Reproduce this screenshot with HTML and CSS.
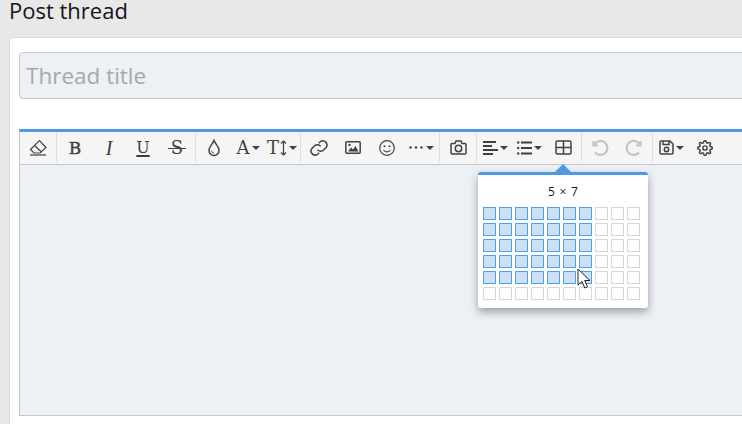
FILE: index.html
```html
<!DOCTYPE html>
<html lang="en">
<head>
<meta charset="utf-8">
<title>Post thread</title>
<link rel="stylesheet" href="styles.css">
</head>
<body>
<main class="page">
  <h1 class="page-title">Post thread</h1>
  <section class="card">
    <input class="title-input" type="text" placeholder="Thread title">
    <div class="editor">
      <div class="toolbar">
        <div class="group">
          <span class="btn"><svg class="icon" width="18" height="18" viewBox="0 0 18 18"><path d="M1.500 10.500 10.500 1.500l6.500 7-6 5.500H5z"/><path d="M5.500 6.500l7 6.500"/><path d="M1 16h16"/></svg></span>
        </div>
        <div class="group">
          <span class="btn"><span class="glyph bold">B</span></span>
          <span class="btn"><span class="glyph italic">I</span></span>
          <span class="btn"><span class="glyph underline">U</span></span>
          <span class="btn"><span class="glyph strike">S</span></span>
        </div>
        <div class="group">
          <span class="btn"><svg class="icon drop" width="14" height="18" viewBox="0 0 14 18"><path d="M7 1.500C5.800 5 2 7.500 2 11.500a5 5 0 0 0 10 0C12 7.500 8.200 5 7 1.500z"/><path d="M4.500 11.500A2.700 2.700 0 0 0 7 14.200" class="thin"/></svg></span>
          <span class="btn"><span class="glyph letter">A</span><span class="caret"></span></span>
          <span class="btn"><span class="glyph letter">T</span><svg class="icon arrows" width="7" height="16" viewBox="0 0 7 16"><path d="M3.500 1v14M1 3.500 3.500 1 6 3.500M1 12.500 3.500 15 6 12.500"/></svg><span class="caret"></span></span>
        </div>
        <div class="group">
          <span class="btn"><svg class="icon" width="20" height="20" viewBox="0 0 24 24"><path class="mid" d="M10 14a5 5 0 0 0 7.500.5l3-3a5 5 0 0 0-7-7l-1.700 1.700"/><path class="mid" d="M14 10a5 5 0 0 0-7.500-.5l-3 3a5 5 0 0 0 7 7l1.700-1.700"/></svg></span>
          <span class="btn"><svg class="icon" width="16" height="13" viewBox="0 0 16 13"><rect x=".8" y=".8" width="14.400" height="11.400" rx="1" class="bold-line"/><path class="solid" d="M3 10.500l3-4 2 2 2.500-3.500 3 5.500z"/><circle class="solid" cx="4.500" cy="4" r="1.200"/></svg></span>
          <span class="btn"><svg class="icon" width="18" height="18" viewBox="0 0 18 18"><circle cx="9" cy="9" r="7.300"/><circle class="solid" cx="6.500" cy="7.200" r="1"/><circle class="solid" cx="11.500" cy="7.200" r="1"/><path d="M5.500 11a4.200 4.200 0 0 0 7 0"/></svg></span>
          <span class="btn"><svg class="icon" width="15" height="3" viewBox="0 0 15 3"><circle class="solid" cx="1.500" cy="1.500" r="1.200"/><circle class="solid" cx="7" cy="1.500" r="1.200"/><circle class="solid" cx="12.500" cy="1.500" r="1.200"/></svg><span class="caret"></span></span>
        </div>
        <div class="group">
          <span class="btn"><svg class="icon" width="17" height="15" viewBox="0 0 17 15"><path class="bold-line" d="M1 4.500a1 1 0 0 1 1-1h3l1-2.500h5l1 2.500h3a1 1 0 0 1 1 1V13a1 1 0 0 1-1 1H2a1 1 0 0 1-1-1z"/><circle class="bold-line" cx="8.500" cy="8.500" r="3.200"/></svg></span>
        </div>
        <div class="group">
          <span class="btn wide"><svg class="icon" width="15" height="14" viewBox="0 0 15 14"><path class="mid" d="M0 1h13M0 5h9M0 9h15M0 13h10"/></svg><span class="caret"></span></span>
          <span class="btn wide"><svg class="icon" width="15" height="14" viewBox="0 0 15 14"><path class="mid" d="M4 1.500h11M4 7h11M4 12.500h11"/><circle class="solid" cx="1.200" cy="1.500" r="1.200"/><circle class="solid" cx="1.200" cy="7" r="1.200"/><circle class="solid" cx="1.200" cy="12.500" r="1.200"/></svg><span class="caret"></span></span>
          <span class="btn narrow"><svg class="icon" width="17" height="15" viewBox="0 0 17 15"><rect x="1" y="1" width="15" height="13" rx="1.500" class="bold-line"/><path class="bold-line" d="M1 7.500h15M8.500 1v13"/></svg></span>
        </div>
        <div class="group">
          <span class="btn off"><svg class="icon" width="18" height="17" viewBox="0 0 18 17"><path class="heavy" d="M2.500 2v4.500H7"/><path class="heavy" d="M3 6a7 7 0 1 1 1 7.500"/></svg></span>
          <span class="btn off"><svg class="icon" width="18" height="17" viewBox="0 0 18 17"><path class="heavy" d="M15.500 2v4.500H11"/><path class="heavy" d="M15 6a7 7 0 1 0-1 7.500"/></svg></span>
        </div>
        <div class="group">
          <span class="btn"><svg class="icon" width="15" height="15" viewBox="0 0 15 15"><path class="bold-line" d="M1 2a1 1 0 0 1 1-1h9l3 3v9a1 1 0 0 1-1 1H2a1 1 0 0 1-1-1z"/><path class="bold-line" d="M4 1v3.500h6V1"/><circle class="bold-line" cx="7.500" cy="9.500" r="2.200"/></svg><span class="caret"></span></span>
          <span class="btn"><svg class="icon" width="16" height="16" viewBox="0 0 24 24"><circle class="heavy" cx="12" cy="12" r="3.200"/><path class="heavy" d="M19.400 15a1.650 1.650 0 0 0 .33 1.820l.06.06a2 2 0 0 1 0 2.830 2 2 0 0 1-2.830 0l-.06-.06a1.650 1.650 0 0 0-1.820-.33 1.650 1.650 0 0 0-1 1.510V21a2 2 0 0 1-2 2 2 2 0 0 1-2-2v-.09A1.650 1.650 0 0 0 9 19.400a1.650 1.650 0 0 0-1.820.33l-.06.06a2 2 0 0 1-2.830 0 2 2 0 0 1 0-2.830l.06-.06a1.650 1.650 0 0 0 .33-1.820 1.650 1.650 0 0 0-1.510-1H3a2 2 0 0 1-2-2 2 2 0 0 1 2-2h.09A1.650 1.650 0 0 0 4.600 9a1.650 1.650 0 0 0-.33-1.820l-.06-.06a2 2 0 0 1 0-2.830 2 2 0 0 1 2.830 0l.06.06a1.650 1.650 0 0 0 1.820.33H9a1.650 1.650 0 0 0 1-1.510V3a2 2 0 0 1 2-2 2 2 0 0 1 2 2v.09a1.650 1.650 0 0 0 1 1.510 1.650 1.650 0 0 0 1.820-.33l.06-.06a2 2 0 0 1 2.830 0 2 2 0 0 1 0 2.830l-.06.06a1.650 1.650 0 0 0-.33 1.820V9a1.650 1.650 0 0 0 1.510 1H21a2 2 0 0 1 2 2 2 2 0 0 1-2 2h-.09a1.650 1.650 0 0 0-1.510 1z"/></svg></span>
        </div>
      </div>
      <div class="editor-body"></div>
    </div>
  </section>
</main>

<div class="popup">
  <div class="popup-label">5 × 7</div>
  <div class="grid">
    <i class="on"></i><i class="on"></i><i class="on"></i><i class="on"></i><i class="on"></i><i class="on"></i><i class="on"></i><i></i><i></i><i></i>
    <i class="on"></i><i class="on"></i><i class="on"></i><i class="on"></i><i class="on"></i><i class="on"></i><i class="on"></i><i></i><i></i><i></i>
    <i class="on"></i><i class="on"></i><i class="on"></i><i class="on"></i><i class="on"></i><i class="on"></i><i class="on"></i><i></i><i></i><i></i>
    <i class="on"></i><i class="on"></i><i class="on"></i><i class="on"></i><i class="on"></i><i class="on"></i><i class="on"></i><i></i><i></i><i></i>
    <i class="on"></i><i class="on"></i><i class="on"></i><i class="on"></i><i class="on"></i><i class="on"></i><i class="on"></i><i></i><i></i><i></i>
    <i></i><i></i><i></i><i></i><i></i><i></i><i></i><i></i><i></i><i></i>
  </div>
</div>

<svg class="cursor" width="14" height="22" viewBox="0 0 14 22"><path d="M1 1v16l4-3.500 2.800 6.500 2.700-1.200-2.800-6.300H13z"/></svg>
</body>
</html>
```

FILE: styles.css
```css
* { box-sizing: border-box; }
html, body { margin: 0; height: 424px; overflow: hidden; }
body {
  background: #e8e8e8;
  font-family: "Open Sans", "Noto Sans", sans-serif;
  color: #141414;
  position: relative;
}
.page { width: 800px; padding: 0 0 0 9px; }
.page-title {
  margin: 0;
  height: 37px;
  font-size: 22px;
  font-weight: 400;
  line-height: 20px;
  color: #141414;
}
.card {
  background: #fff;
  border: 1px solid #dcdcdc;
  border-radius: 4px;
  padding: 14px 9px 0;
  height: 420px;
}
.title-input {
  display: block;
  width: 100%;
  height: 47px;
  padding: 0 6px;
  border: 1px solid #c8c9cc;
  border-radius: 4px;
  background: #edf0f5;
  font: 400 22.500px "Open Sans", "Noto Sans", sans-serif;
  color: #333;
}
.title-input::placeholder { color: #a6a8ac; opacity: 1; }
.editor {
  margin-top: 30px;
  border-top: 3px solid #4e98e4;
  border-left: 1px solid #c5c7cc;
  border-right: 1px solid #c5c7cc;
}
.toolbar {
  display: flex;
  height: 33px;
  background: #f5f5f5;
  border-bottom: 1px solid #c8c8c8;
  padding-top: 1px;
  align-items: flex-start;
}
.group {
  display: flex;
  height: 29px;
  padding: 0 1px;
  border-right: 1px solid #dedede;
}
.group:last-child { border-right: 0; }
.btn {
  width: 34px;
  height: 29px;
  display: flex;
  align-items: center;
  justify-content: center;
  gap: 2px;
  color: #414141;
}
.btn.off { color: #c4c4c4; }
.glyph {
  font-family: "DejaVu Serif", "Liberation Serif", serif;
  font-size: 17px;
  line-height: 20px;
  color: #414141;
}
.bold { -webkit-text-stroke: 0.400px #414141; }
.italic { font-family: "Liberation Serif", serif; font-style: italic; font-size: 20px; }
.underline { text-decoration: underline; text-underline-offset: 2px; text-decoration-thickness: 1.500px; font-size: 16px; }
.strike { position: relative; font-size: 18px; }
.strike::after {
  content: "";
  position: absolute;
  left: -3px;
  right: -3px;
  top: 10px;
  height: 1.500px;
  background: #414141;
}
.letter { font-size: 18px; }
.icon { display: block; flex: none; fill: none; stroke: currentColor; stroke-width: 1.200; }
.icon .heavy { stroke-width: 2.200; }
.icon .mid { stroke-width: 1.800; }
.icon .bold-line { stroke-width: 1.500; }
.icon .thin { stroke-width: 0.800; }
.icon .solid { fill: currentColor; stroke: none; }
.drop { stroke-width: 1.500; }
.arrows { margin-left: -1px; }
.caret {
  width: 0;
  height: 0;
  border-left: 4px solid transparent;
  border-right: 4px solid transparent;
  border-top: 4px solid #414141;
  flex: none;
}
.editor-body { height: 251px; background: #edf0f5; border-bottom: 1px solid #c5c7cc; }

.popup {
  position: absolute;
  left: 478px;
  top: 172px;
  width: 170px;
  height: 136px;
  background: #fff;
  border-top: 3px solid #4e98e4;
  border-radius: 3px;
  box-shadow: 0 4px 8px rgba(0, 0, 0, 0.35);
  padding: 8px 5px 0;
}
.popup::before {
  content: "";
  position: absolute;
  left: 77px;
  top: -11px;
  border-left: 8px solid transparent;
  border-right: 8px solid transparent;
  border-bottom: 8px solid #4e98e4;
}
.popup-label {
  text-align: center;
  font-size: 12px;
  line-height: 17px;
  height: 24px;
  word-spacing: 1.500px;
  color: #141414;
}
.grid {
  display: grid;
  grid-template-columns: repeat(10, 13px);
  grid-auto-rows: 13px;
  gap: 3px;
}
.grid i { display: block; border: 1px solid #d8d8d8; background: #fff; }
.grid i.on { border-color: #4e9fec; background: #cae1f8; }
.cursor {
  position: absolute;
  left: 577px;
  top: 268px;
  fill: #fff;
  stroke: #222;
  stroke-width: 1;
}
```
